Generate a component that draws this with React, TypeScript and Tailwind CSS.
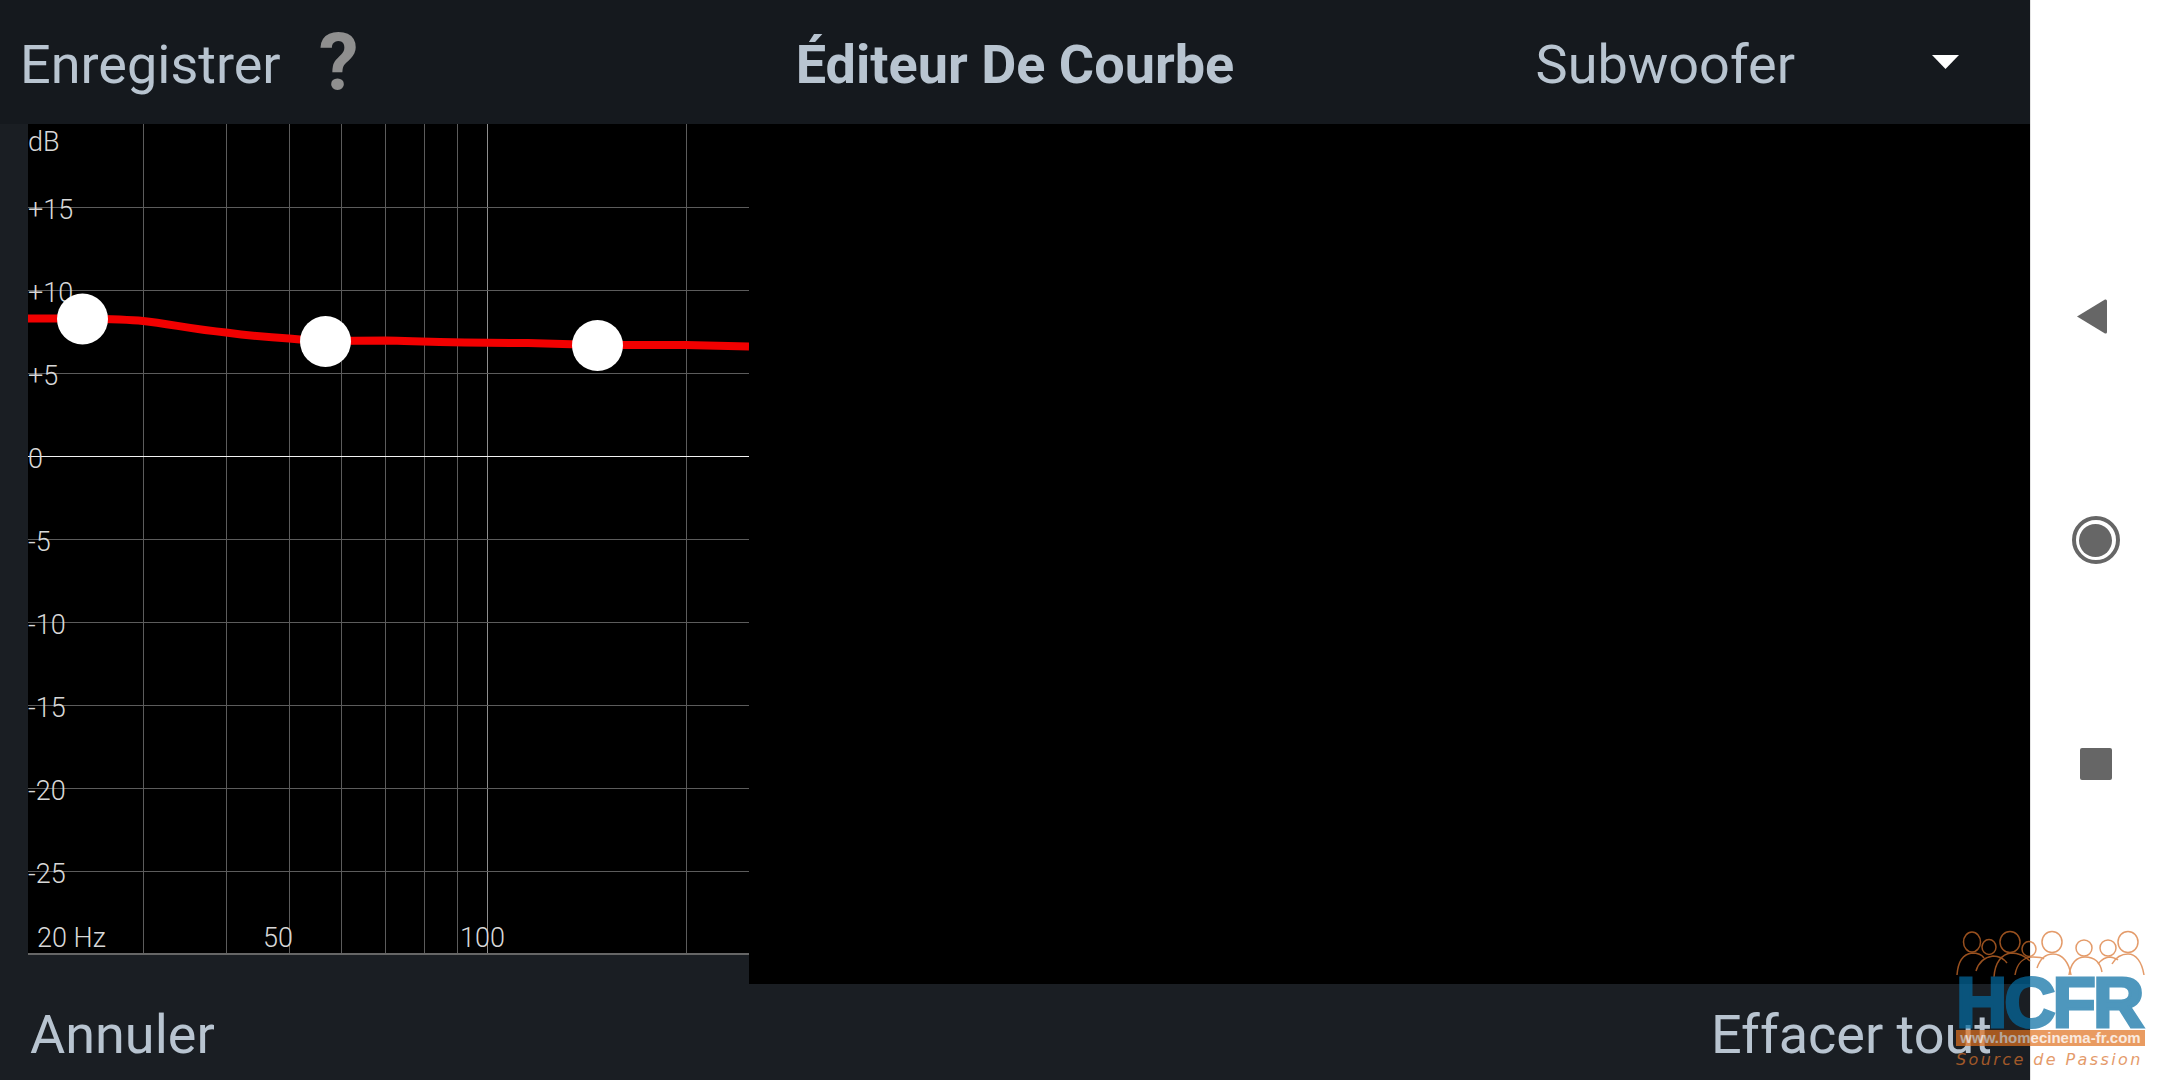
import React from "react";

const freqLines = [115, 198, 261, 313, 357, 396, 429, 658];
const dbLines = [83, 166, 249, 415, 498, 581, 664, 747];
const dbLabels = [
  { text: "dB", y: 27 },
  { text: "+15", y: 95 },
  { text: "+10", y: 178 },
  { text: "+5", y: 261 },
  { text: "0", y: 344 },
  { text: "-5", y: 427 },
  { text: "-10", y: 510 },
  { text: "-15", y: 593 },
  { text: "-20", y: 676 },
  { text: "-25", y: 759 },
];
const handles = [
  { x: 54.5, y: 195 },
  { x: 297.5, y: 217.5 },
  { x: 569.5, y: 221.5 },
];

const Chart = () => (
  <svg width={721} height={831} className="block bg-black" style={{ fontFamily: "Roboto, sans-serif" }}>
    {freqLines.map((x) => (
      <line key={x} x1={x + 0.5} x2={x + 0.5} y1={0} y2={831} stroke="#5c5c5c" strokeWidth={1} />
    ))}
    <line x1={459.5} x2={459.5} y1={0} y2={831} stroke="#8e8e8e" strokeWidth={1} />
    {dbLines.map((y) => (
      <line key={y} x1={0} x2={721} y1={y + 0.5} y2={y + 0.5} stroke="#5c5c5c" strokeWidth={1} />
    ))}
    <line x1={0} x2={721} y1={332.5} y2={332.5} stroke="#f2f2f2" strokeWidth={1} />
    <line x1={0} x2={721} y1={830} y2={830} stroke="#666666" strokeWidth={2} />
    {dbLabels.map((l) => (
      <text key={l.text} x={0} y={l.y} fontSize={27} fontWeight={300} fill="#d8d8d8">
        {l.text}
      </text>
    ))}
    <text x={9} y={823} fontSize={27} fontWeight={300} fill="#d8d8d8">20 Hz</text>
    <text x={235} y={823} fontSize={27} fontWeight={300} fill="#d8d8d8">50</text>
    <text x={432} y={823} fontSize={27} fontWeight={300} fill="#d8d8d8">100</text>
    <path
      d="M0 194.5 L54 194.5 C80 195 100 195.5 115 197 C140 199.5 165 205.5 198 208.5 C220 211.5 240 213.5 261 214.5 C275 216 285 217 297 217 L358 216.5 C400 217.5 440 219 500 219 L569 221 L658 221 L721 222.5"
      fill="none"
      stroke="#f20000"
      strokeWidth={8}
    />
    {handles.map((h) => (
      <circle key={h.x} cx={h.x} cy={h.y} r={25.5} fill="#ffffff" />
    ))}
  </svg>
);

const Watermark = () => (
  <div className="absolute left-[1956px] top-[928px] w-[189px] h-[146px] opacity-70 pointer-events-none">
    <svg width={189} height={50} viewBox="0 0 189 50" fill="none" stroke="#d9722c" strokeWidth={1.5} className="block">
      <ellipse cx={16} cy={14} rx={8.5} ry={10} />
      <ellipse cx={33} cy={19} rx={7} ry={7.5} />
      <ellipse cx={54} cy={14} rx={10} ry={10.5} />
      <ellipse cx={73} cy={21} rx={7} ry={7.5} />
      <ellipse cx={96} cy={14} rx={10} ry={10.5} />
      <ellipse cx={128} cy={20} rx={8} ry={8} />
      <ellipse cx={152} cy={20} rx={8} ry={8} />
      <ellipse cx={172} cy={14} rx={10} ry={10.5} />
      <path d="M1 47 C2 33 8 26 16 25 C22 25 26 27 28 30" />
      <path d="M20 43 C23 33 30 29 37 28 C44 28 48 31 51 35" />
      <path d="M38 49 C39 34 46 26 55 25 C64 25 70 29 74 33" />
      <path d="M59 47 C61 35 68 29 77 29 C82 29 86 29 88 31" />
      <path d="M81 40 C84 31 90 26 97 26 C107 26 113 35 115 47" />
      <path d="M113 47 C115 35 120 29 129 29 C138 29 144 33 146 44" />
      <path d="M142 36 C146 31 150 29 154 29 C158 30 160 30 162 32" />
      <path d="M156 36 C160 29 166 26 172 26 C180 26 186 34 188 47" />
    </svg>
    <div className="h-[50px] text-[71px] leading-[50px] font-bold tracking-[-3px] text-[#046ca2] [-webkit-text-stroke:3px_#046ca2] whitespace-nowrap" style={{ fontFamily: '"Liberation Sans", sans-serif' }}>
      HCFR
    </div>
    <div className="mt-[2px] h-[16px] bg-[#e0711f] text-[15px] leading-[16px] font-bold text-white/80 text-center whitespace-nowrap" style={{ fontFamily: '"Liberation Sans", sans-serif' }}>
      www.homecinema-fr.com
    </div>
    <div className="mt-[6px] text-[16px] leading-[16px] italic text-[#d9722c] tracking-[2.4px] whitespace-nowrap" style={{ fontFamily: '"DejaVu Sans", sans-serif' }}>
      Source de Passion
    </div>
  </div>
);

export default function App() {
  return (
    <div className="relative flex w-[2160px] h-[1080px] overflow-hidden bg-white" style={{ fontFamily: "Roboto, sans-serif" }}>
      <div className="flex flex-col w-[2030px] h-full bg-[#1a1e23]">
        <header className="flex items-center justify-between h-[124px] pt-[6px] bg-[#15191e] text-[#b8c4d0]">
          <div className="flex items-center w-[700px] pl-[20px]">
            <span className="text-[54px] leading-none">Enregistrer</span>
            <span className="ml-[38px] -mt-[4px] text-[80px] leading-none font-bold text-[#8f8f8f]">?</span>
          </div>
          <h1 className="text-[54px] leading-none font-bold whitespace-nowrap">Éditeur De Courbe</h1>
          <div className="flex items-center justify-end w-[700px] pr-[71px]">
            <span className="text-[54px] leading-none">Subwoofer</span>
            <svg width={27} height={14} viewBox="0 0 27 14" className="ml-[137px] -mt-[6px]">
              <path d="M0 0 L27 0 L13.5 14 Z" fill="#ffffff" />
            </svg>
          </div>
        </header>
        <div className="flex h-[860px]">
          <div className="w-[749px] pl-[28px]">
            <Chart />
          </div>
          <div className="flex-1 bg-black" />
        </div>
        <footer className="flex items-center justify-between flex-1 pt-[5px] pl-[30px] pr-[38px] text-[54px] leading-none text-[#b8c4d0]">
          <span>Annuler</span>
          <span>Effacer tout</span>
        </footer>
      </div>
      <nav className="flex flex-col items-center justify-center flex-1 border-l border-[#e4e4e4]">
        <button className="flex items-center justify-center h-[224px]">
          <svg width={32} height={37} viewBox="0 0 32 37" className="-ml-[8px]">
            <path d="M1 18.5 L29 1.5 Q31 1 31 3 L31 34 Q31 36 29 35.5 Z" fill="#666666" />
          </svg>
        </button>
        <button className="flex items-center justify-center h-[224px]">
          <span className="flex items-center justify-center w-[48px] h-[48px] rounded-full border-[4px] border-[#666666]">
            <span className="block w-[33px] h-[33px] rounded-full bg-[#666666]" />
          </span>
        </button>
        <button className="flex items-center justify-center h-[224px]">
          <span className="block w-[32px] h-[32px] rounded-[2px] bg-[#666666]" />
        </button>
      </nav>
      <Watermark />
    </div>
  );
}
